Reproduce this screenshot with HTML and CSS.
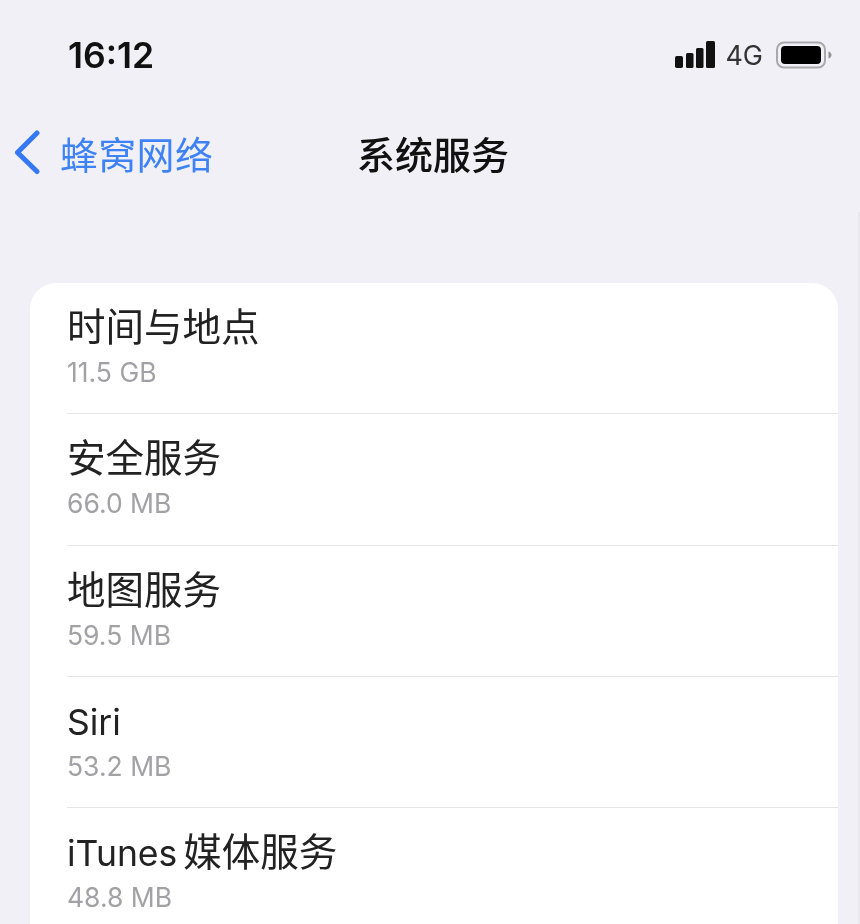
FILE: index.html
```html
<!DOCTYPE html>
<html lang="zh-cn">
<head>
    <meta charset="UTF-8">
    <meta name="viewport" content="width=device-width, initial-scale=1.0">
    <title>系统服务</title>
    <link rel="stylesheet" href="styles.css">
</head>
<body>
    <div class="status-bar">
        <span class="time">16:12</span>
        <div class="status-icons">
            <svg class="signal" width="40" height="28" viewBox="0 0 40 28">
                <rect x="0" y="15" width="8" height="12" rx="1.800"/>
                <rect x="11" y="12" width="7.500" height="15" rx="1.500"/>
                <rect x="21" y="7" width="7.500" height="20" rx="1.500"/>
                <rect x="31" y="0" width="9" height="27" rx="1.500"/>
            </svg>
            <span class="network">4G</span>
            <svg class="battery" width="57" height="28" viewBox="0 0 57 28">
                <rect x="1" y="1.500" width="48" height="25" rx="7" fill="none" stroke="#a9a9ab" stroke-width="2"/>
                <rect x="5" y="5" width="40" height="18" rx="4" fill="#000"/>
                <path d="M52.500 10.500c2 .6 3 2 3 3.500s-1 2.900-3 3.500z" fill="#8f8f91"/>
            </svg>
        </div>
    </div>

    <div class="nav-bar">
        <div class="back">
            <svg width="30" height="46" viewBox="0 0 30 46">
                <path d="M23 4L3.500 23.500l19.500 19" fill="none" stroke="#3478f6" stroke-width="5" stroke-linecap="round" stroke-linejoin="round"/>
            </svg>
            <span class="back-label">蜂窝网络</span>
        </div>
        <h1 class="nav-title">系统服务</h1>
    </div>

    <div class="list">
        <div class="row">
            <div class="row-title">时间与地点</div>
            <div class="row-size">11.5 GB</div>
        </div>
        <div class="row">
            <div class="row-title">安全服务</div>
            <div class="row-size">66.0 MB</div>
        </div>
        <div class="row">
            <div class="row-title">地图服务</div>
            <div class="row-size">59.5 MB</div>
        </div>
        <div class="row">
            <div class="row-title"><span class="latin">Siri</span></div>
            <div class="row-size">53.2 MB</div>
        </div>
        <div class="row">
            <div class="row-title"><span class="latin">iTunes</span>媒体服务</div>
            <div class="row-size">48.8 MB</div>
        </div>
    </div>
</body>
</html>
```

FILE: styles.css
```css
body {
    margin: 0;
    height: 100vh;
    display: flex;
    flex-direction: column;
    background-color: #f0f0f6;
    font-family: "Inter", "Noto Sans CJK SC", sans-serif;
    color: #1c1c1e;
    overflow: hidden;
    filter: blur(0.5px);
}
/* faint strip down the right edge of the screen */
body::after {
    content: "";
    position: absolute;
    top: 212px;
    right: 0;
    bottom: 0;
    width: 2px;
    background: #e8e8ee;
}
.status-bar {
    flex: none;
    height: 110px;
    box-sizing: border-box;
    padding: 36px 27px 0 68px;
    display: flex;
    justify-content: space-between;
    align-items: flex-start;
}
.time {
    font-size: 35.500px;
    line-height: 40px;
    font-weight: 600;
    color: #111;
}
.status-icons {
    display: flex;
    align-items: center;
    height: 38px;
}
.signal {
    fill: #111;
    margin-right: 10px;
}
.network {
    font-size: 27px;
    color: #333;
    margin-right: 13px;
}
.nav-bar {
    flex: none;
    height: 84px;
    position: relative;
    display: flex;
    align-items: center;
    justify-content: center;
}
.back {
    position: absolute;
    left: 14px;
    top: 0;
    height: 84px;
    display: flex;
    align-items: center;
    gap: 16px;
}
.back svg {
    display: block;
}
.back-label {
    font-size: 38px;
    color: #3d82f6;
    letter-spacing: 0.3px;
}
.nav-title {
    margin: 0 0 0 6px;
    font-size: 38px;
    font-weight: 500;
    color: #111;
}
.list {
    flex: 1;
    min-height: 0;
    overflow: hidden;
    margin: 89px 22px 0 30px;
    padding-left: 37px;
    background: #fff;
    border-radius: 26px 26px 0 0;
}
.row {
    height: 131.250px;
    box-sizing: border-box;
    padding-top: 20px;
    border-bottom: 1.500px solid #e6e6e9;
}
.row-title {
    height: 48px;
    font-size: 38.500px;
    line-height: 48px;
    color: #222;
}
.latin {
    font-size: 35.500px;
    line-height: 1;
    margin-right: 6px;
}
.row-size {
    margin-top: 6px;
    font-size: 26.500px;
    line-height: 30px;
    color: #a2a2a6;
}
```
